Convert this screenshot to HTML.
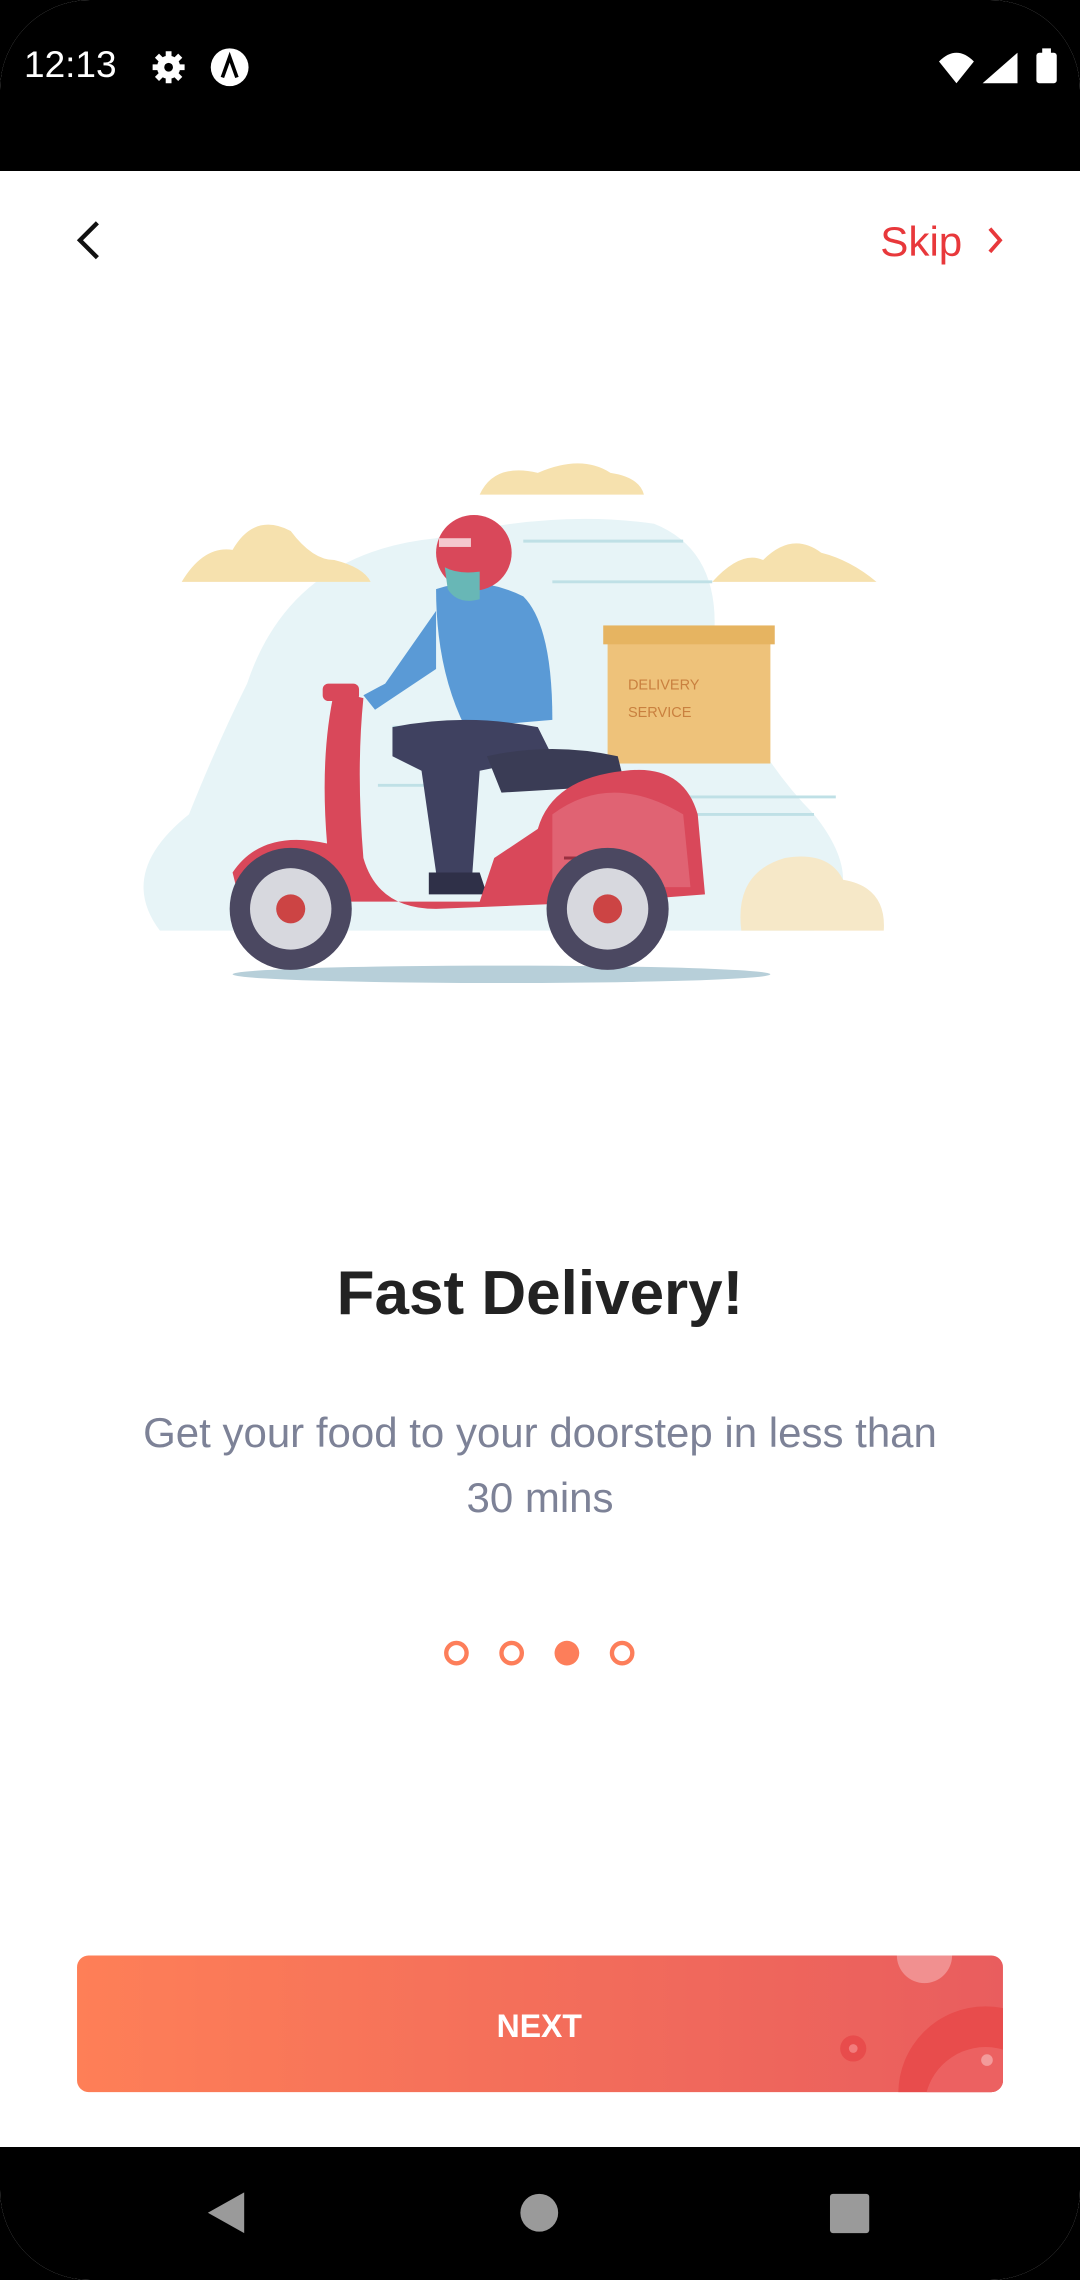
<!DOCTYPE html>
<html><head><meta charset="utf-8"><style>
html,body{margin:0;padding:0;background:#000;}
#p{position:relative;width:1080px;height:2280px;background:#fff;overflow:hidden;border-radius:90px;font-family:"Liberation Sans",sans-serif;}
.abs{position:absolute;}
</style></head><body><div id="p">
<div class="abs" style="left:0;top:0;width:1080px;height:171px;background:#000;"></div>
<div class="abs" style="left:0;top:2147px;width:1080px;height:133px;background:#000;"></div>
<div class="abs" style="left:24px;top:44px;color:#fff;font-size:37px;">12:13</div>
<svg class="abs" style="left:0;top:0" width="1080" height="2280" viewBox="0 0 743 1568">
 <g fill="#fff">
  <circle cx="116" cy="46" r="8"/>
  <g stroke="#fff" stroke-width="4"><line x1="116" y1="35" x2="116" y2="57"/><line x1="105" y1="46" x2="127" y2="46"/><line x1="108" y1="38" x2="124" y2="54"/><line x1="124" y1="38" x2="108" y2="54"/></g>
  <circle cx="116" cy="46" r="3" fill="#000"/>
  <circle cx="158" cy="46" r="13"/>
  <path d="M153 53 L158 39 L163 53" stroke="#000" stroke-width="2.5" fill="none"/>
  <path d="M646 42 Q658 30 670 42 L658 57 Z"/>
  <path d="M676 57 L700 57 L700 36 Z"/>
  <rect x="713" y="36" width="14" height="21" rx="2"/><rect x="717" y="33" width="6" height="4"/>
 </g>
 <path d="M67 153 L55 165 L67 177" stroke="#111" stroke-width="3" fill="none"/>
 <text x="662" y="176" text-anchor="end" fill="#e8383b" font-size="29" font-family="Liberation Sans, sans-serif">Skip</text>
 <path d="M681 157 L688 165 L681 173" stroke="#e8383b" stroke-width="2.6" fill="none"/>
 <g>
  <path d="M170 470 Q200 380 300 370 Q380 350 450 360 Q500 380 490 450 Q520 520 560 560 Q600 610 560 640 L110 640 Q80 600 130 560 Q150 510 170 470Z" fill="#e7f4f7"/>
  <path d="M330 340 Q340 318 370 325 Q400 312 420 325 Q440 328 443 340Z" fill="#f6e1ae"/>
  <path d="M125 400 Q140 375 160 378 Q175 352 200 365 Q215 385 230 385 Q250 390 255 400Z" fill="#f6e1ae"/>
  <path d="M490 400 Q510 378 525 385 Q545 365 565 380 Q585 385 603 400Z" fill="#f6e1ae"/>
  <path d="M510 640 Q505 600 540 590 Q570 585 580 605 Q610 610 608 640Z" fill="#f6e8c8"/>
  <g stroke="#bfe0e6" stroke-width="2"><line x1="360" y1="372" x2="470" y2="372"/><line x1="380" y1="400" x2="490" y2="400"/><line x1="450" y1="548" x2="575" y2="548"/><line x1="440" y1="560" x2="560" y2="560"/><line x1="270" y1="500" x2="330" y2="500"/><line x1="260" y1="540" x2="300" y2="540"/></g>
  <ellipse cx="345" cy="670" rx="185" ry="6" fill="#b7cfd9"/>
  <rect x="418" y="440" width="112" height="85" fill="#eec27a"/>
  <rect x="415" y="430" width="118" height="13" fill="#e6b461"/>
  <text x="432" y="474" font-size="10" fill="#c9803f" font-family="Liberation Sans, sans-serif">DELIVERY</text>
  <text x="432" y="493" font-size="10" fill="#c9803f" font-family="Liberation Sans, sans-serif">SERVICE</text>
  <path d="M300 405 Q330 395 360 410 Q380 430 380 495 L320 500 Q300 460 300 405Z" fill="#5a9ad6"/>
  <path d="M300 420 L265 470 L250 478 L258 488 L300 460Z" fill="#5a9ad6"/>
  <path d="M270 500 Q320 490 370 500 L380 520 L330 530 L325 600 L300 600 L290 530 L270 520Z" fill="#3f4160"/>
  <path d="M295 600 L330 600 L335 615 L295 615Z" fill="#2f3048"/>
  <circle cx="326" cy="380" r="26" fill="#d9485a"/>
  <path d="M306 390 Q315 395 330 393 L330 412 Q315 416 308 405Z" fill="#68b7b6"/>
  <rect x="302" y="370" width="22" height="6" fill="#fff" opacity="0.7"/>
  <path d="M335 520 Q380 510 425 520 L430 540 L345 545Z" fill="#3a3c55"/>
  <path d="M230 475 Q220 520 225 580 Q180 570 160 600 L165 620 L330 620 L340 590 L370 570 Q380 535 430 530 Q470 525 480 560 L485 615 L420 620 L300 625 Q260 625 250 590 Q245 530 250 480Z" fill="#d9485a"/>
  <path d="M380 560 Q420 530 470 560 L475 610 L380 610Z" fill="#e06373"/>
  <rect x="222" y="470" width="25" height="12" rx="4" fill="#d9485a"/>
  <g stroke="#9a3040" stroke-width="2"><line x1="388" y1="590" x2="425" y2="590"/><line x1="388" y1="597" x2="425" y2="597"/><line x1="388" y1="604" x2="425" y2="604"/></g>
  <circle cx="200" cy="625" r="42" fill="#4b4861"/><circle cx="200" cy="625" r="28" fill="#d7d8de"/><circle cx="200" cy="625" r="10" fill="#c44"/>
  <circle cx="418" cy="625" r="42" fill="#4b4861"/><circle cx="418" cy="625" r="28" fill="#d7d8de"/><circle cx="418" cy="625" r="10" fill="#c44"/>
 </g>
 <g stroke="#fd7e5a" stroke-width="3" fill="none">
  <circle cx="314" cy="1137" r="7"/><circle cx="352" cy="1137" r="7"/><circle cx="428" cy="1137" r="7"/>
 </g>
 <circle cx="390" cy="1137" r="8.5" fill="#fd7e5a"/>
 <defs>
  <linearGradient id="g" x1="0" x2="1"><stop offset="0" stop-color="#fe7f57"/><stop offset="1" stop-color="#e95d5e"/></linearGradient>
  <clipPath id="c"><rect x="53" y="1345" width="637" height="94" rx="8"/></clipPath>
 </defs>
 <rect x="53" y="1345" width="637" height="94" rx="8" fill="url(#g)"/>
 <g clip-path="url(#c)">
  <circle cx="636" cy="1345" r="19" fill="#f19090"/>
  <circle cx="678" cy="1440" r="60" fill="#e84c4c"/>
  <circle cx="678" cy="1450" r="42" fill="#ec6161"/>
  <circle cx="679" cy="1417" r="4" fill="#f39a9a"/>
  <circle cx="587" cy="1409" r="9" fill="#e84c4c"/><circle cx="587" cy="1409" r="3" fill="#f27c7c"/>
 </g>
 <text x="371" y="1401" text-anchor="middle" fill="#fff" font-size="22" font-weight="bold" font-family="Liberation Sans, sans-serif">NEXT</text>
 <path d="M168 1508 L168 1536 L143 1522Z" fill="#9a9a9a"/>
 <circle cx="371" cy="1522" r="13" fill="#9a9a9a"/>
 <rect x="571" y="1509" width="27" height="27" rx="2" fill="#9a9a9a"/>
</svg>
<div class="abs" style="left:0;top:1258px;width:1080px;text-align:center;font-size:62px;font-weight:bold;color:#222;">Fast Delivery!</div>
<div class="abs" style="left:40px;top:1400px;width:1000px;text-align:center;font-size:42px;line-height:65px;color:#7d8297;">Get your food to your doorstep in less than<br>30 mins</div>
</div></body></html>
